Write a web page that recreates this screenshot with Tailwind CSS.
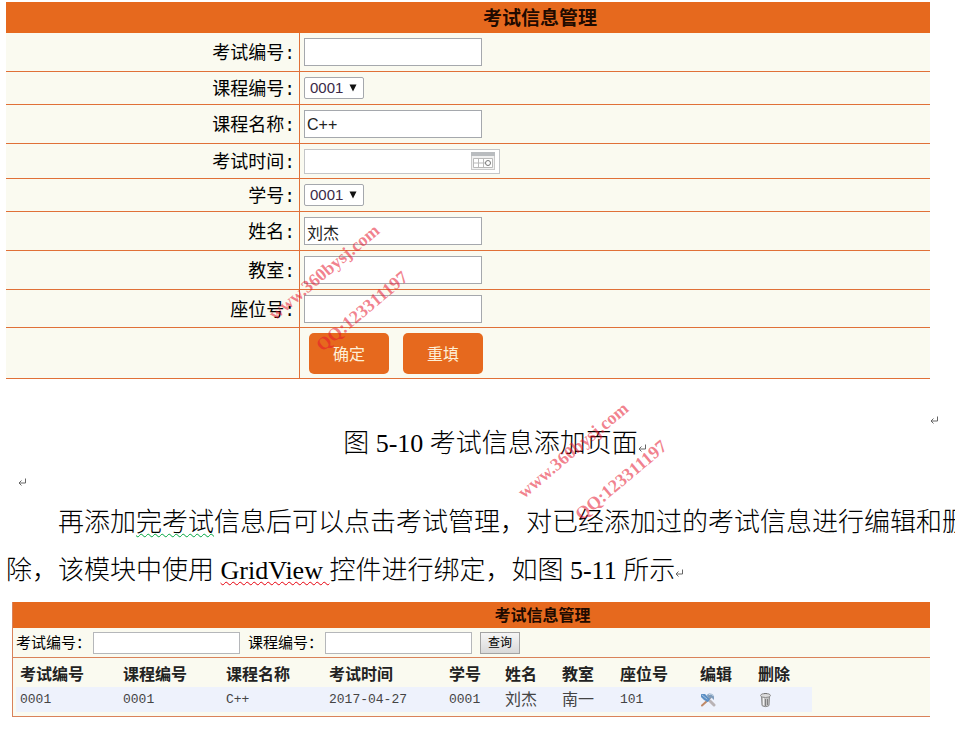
<!DOCTYPE html>
<html lang="zh-CN">

<head>
  <meta charset="UTF-8" />
  <meta name="viewport" content="width=device-width, initial-scale=1.0" />
  <script src="https://cdn.jsdelivr.net/npm/@tailwindcss/browser@4"></script>
  <title>考试信息管理</title>
</head>

<body class="relative overflow-x-hidden bg-white pt-0.5 text-black font-['Liberation_Sans','Noto_Sans_CJK_SC',sans-serif]">
  <svg class="hidden">
    <symbol id="return" viewBox="0 0 8 8">
      <path d="M7.5 0.5v4.5H1.5M3.5 2.5L1 5l2.500 2.500" fill="none" stroke="#666" />
    </symbol>
    <symbol id="arrow" viewBox="0 0 8 8">
      <path d="M0.500 0.500h7L4 7.500z" fill="#111" />
    </symbol>
  </svg>

  <!-- Add exam form -->
  <form class="pl-1.5 pr-[25px]">
    <table class="w-full border-separate border-spacing-0 bg-[#fafaf0]">
      <thead>
        <tr>
          <th colspan="2" class="h-[31px] bg-[#e6691e] p-0 pt-0.5 pl-36 text-[19px] leading-6 font-bold text-[#200a00]">考试信息管理</th>
        </tr>
      </thead>
      <tbody class="text-lg leading-6">
        <tr>
          <td class="h-[39px] w-[294px] border-r border-b border-[#e07038] pt-1 pr-1 text-right font-['Liberation_Mono','Noto_Sans_CJK_SC',monospace]"><label for="examNo">考试编号:</label></td>
          <td class="border-b border-[#e07038] pl-1"><input id="examNo" type="text" class="block h-7 w-[178px] border border-[#a5a8ad] bg-white px-0.5 text-base" /></td>
        </tr>
        <tr>
          <td class="h-[33px] border-r border-b border-[#e07038] pt-1 pr-1 text-right font-['Liberation_Mono','Noto_Sans_CJK_SC',monospace]"><label for="courseNo">课程编号:</label></td>
          <td class="border-b border-[#e07038] pl-1">
            <div class="relative w-[60px]">
              <select id="courseNo" class="block h-[22px] w-full appearance-none rounded-xs border border-[#a5a8ad] bg-white pl-[5px] text-[15px] leading-5 text-[#3b2a48]">
                <option>0001</option>
              </select>
              <svg class="pointer-events-none absolute top-[7px] right-[7px] size-2"><use href="#arrow" /></svg>
            </div>
          </td>
        </tr>
        <tr>
          <td class="h-[39px] border-r border-b border-[#e07038] pt-1 pr-1 text-right font-['Liberation_Mono','Noto_Sans_CJK_SC',monospace]"><label for="courseName">课程名称:</label></td>
          <td class="border-b border-[#e07038] pl-1"><input id="courseName" type="text" value="C++" class="block h-7 w-[178px] border border-[#a5a8ad] bg-white px-0.5 pt-0.5 text-base text-[#222]" /></td>
        </tr>
        <tr>
          <td class="h-[35px] border-r border-b border-[#e07038] pt-1 pr-1 text-right font-['Liberation_Mono','Noto_Sans_CJK_SC',monospace]"><label for="examTime">考试时间:</label></td>
          <td class="border-b border-[#e07038] pl-1">
            <div class="relative w-[196px]">
              <input id="examTime" type="text" class="block h-[25px] w-full border border-[#c4c6c8] bg-white px-0.5 text-base" />
              <svg class="pointer-events-none absolute top-[3px] right-[5px] h-[18px] w-6" viewBox="0 0 24 18" fill="none">
                <rect x="0.500" y="0.500" width="23" height="17" fill="#f1f1f1" stroke="#c9c9c9" />
                <rect width="24" height="4" fill="#b9bcbf" />
                <path d="M2.500 6.500h19v9h-19zM2.500 11h12M7.500 6.500v9M12.500 6.500v9" fill="#fff" stroke="#b9b9b9" />
                <circle cx="17" cy="11" r="2.500" fill="#fff" stroke="#777" />
              </svg>
            </div>
          </td>
        </tr>
        <tr>
          <td class="h-[33px] border-r border-b border-[#e07038] pt-1 pr-1 text-right font-['Liberation_Mono','Noto_Sans_CJK_SC',monospace]"><label for="studentNo">学号:</label></td>
          <td class="border-b border-[#e07038] pl-1">
            <div class="relative w-[60px]">
              <select id="studentNo" class="block h-[22px] w-full appearance-none rounded-xs border border-[#a5a8ad] bg-white pl-[5px] text-[15px] leading-5 text-[#3b2a48]">
                <option>0001</option>
              </select>
              <svg class="pointer-events-none absolute top-[7px] right-[7px] size-2"><use href="#arrow" /></svg>
            </div>
          </td>
        </tr>
        <tr>
          <td class="h-[39px] border-r border-b border-[#e07038] pt-1 pr-1 text-right font-['Liberation_Mono','Noto_Sans_CJK_SC',monospace]"><label for="studentName">姓名:</label></td>
          <td class="border-b border-[#e07038] pl-1"><input id="studentName" type="text" value="刘杰" class="block h-7 w-[178px] border border-[#a5a8ad] bg-white px-0.5 pt-0.5 text-base text-[#222]" /></td>
        </tr>
        <tr>
          <td class="h-[39px] border-r border-b border-[#e07038] pt-1 pr-1 text-right font-['Liberation_Mono','Noto_Sans_CJK_SC',monospace]"><label for="room">教室:</label></td>
          <td class="border-b border-[#e07038] pl-1"><input id="room" type="text" class="block h-7 w-[178px] border border-[#a5a8ad] bg-white px-0.5 text-base" /></td>
        </tr>
        <tr>
          <td class="h-[38px] border-r border-b border-[#e07038] pt-1 pr-1 text-right font-['Liberation_Mono','Noto_Sans_CJK_SC',monospace]"><label for="seat">座位号:</label></td>
          <td class="border-b border-[#e07038] pl-1"><input id="seat" type="text" class="block h-7 w-[178px] border border-[#a5a8ad] bg-white px-0.5 text-base" /></td>
        </tr>
        <tr>
          <td class="h-[51px] border-r border-b border-[#e07038]"></td>
          <td class="border-b border-[#e07038] pl-[9px]">
            <div class="flex gap-[14px]">
              <button type="button" class="h-[41px] w-20 rounded-[5px] bg-[#e6691e] pt-1 text-base text-[#fdf0d8]">确定</button>
              <button type="reset" class="h-[41px] w-20 rounded-[5px] bg-[#e6691e] pt-1 text-base text-[#fdf0d8]">重填</button>
            </div>
          </td>
        </tr>
      </tbody>
    </table>
  </form>

  <!-- Document text -->
  <div class="overflow-hidden pt-0.5 pl-1.5 text-[26px] whitespace-nowrap font-light font-['Liberation_Serif','Noto_Sans_CJK_SC',serif]">
    <div class="flex h-[47px] items-end justify-end pr-[17px] pb-1"><svg class="size-2"><use href="#return" /></svg></div>
    <p class="flex items-end justify-center pl-7 leading-8">图 5-10 考试信息添加页面<svg class="mb-2 size-2"><use href="#return" /></svg></p>
    <div class="flex h-[39px] items-center pt-1 pl-3"><svg class="size-2"><use href="#return" /></svg></div>
    <p class="pl-[52px] leading-[48px]">再添加<span class="underline decoration-green-600 decoration-wavy decoration-1 underline-offset-2 [text-decoration-skip-ink:none]">完考试</span>信息后可以点击考试管理，对已经添加过的考试信息进行编辑和删</p>
    <p class="leading-[48px]">除，该模块中使用 <span class="underline decoration-red-600 decoration-wavy decoration-1 underline-offset-2 [text-decoration-skip-ink:none]">GridView </span>控件进行绑定，如图 5-11 所示<svg class="inline size-2"><use href="#return" /></svg></p>
  </div>

  <!-- Exam list -->
  <section class="mt-[7px] mr-[25px] ml-3 border-b border-l border-[#d9825a] bg-[#fafaf0]">
    <h2 class="h-[26px] bg-[#e6691e] pl-[142px] text-center text-base leading-7 font-bold text-[#200a00]">考试信息管理</h2>
    <form class="flex h-[30px] items-center border-b border-[#d9825a] pl-[3px] text-[15px] leading-5">
      <label for="searchExam">考试编号：</label>
      <input id="searchExam" type="text" class="ml-0.5 h-[22px] w-[147px] border border-[#b5b7ba] bg-white px-0.5 text-sm" />
      <label for="searchCourse" class="ml-2">课程编号：</label>
      <input id="searchCourse" type="text" class="ml-0.5 h-[22px] w-[147px] border border-[#b5b7ba] bg-white px-0.5 text-sm" />
      <button type="button" class="ml-2 h-[22px] w-10 border border-[#a3a3a3] bg-linear-to-b from-[#f6f6f6] to-[#d9d9d9] text-xs">查询</button>
    </form>
    <div class="px-[3px] py-1">
      <table class="w-[796px] table-fixed border-separate border-spacing-0 text-left text-base leading-6">
        <thead class="text-[#222]">
          <tr>
            <th class="h-[25px] w-[103px] p-0 pl-1">考试编号</th>
            <th class="w-[103px] p-0 pl-1">课程编号</th>
            <th class="w-[103px] p-0 pl-1">课程名称</th>
            <th class="w-[120px] p-0 pl-1">考试时间</th>
            <th class="w-14 p-0 pl-1">学号</th>
            <th class="w-[57px] p-0 pl-1">姓名</th>
            <th class="w-[58px] p-0 pl-1">教室</th>
            <th class="w-20 p-0 pl-1">座位号</th>
            <th class="w-[58px] p-0 pl-1">编辑</th>
            <th class="w-[58px] p-0 pl-1">删除</th>
          </tr>
        </thead>
        <tbody class="bg-[#eef2fc] text-[#444]">
          <tr>
            <td class="h-[25px] p-0 pl-1 text-[13px] font-['Liberation_Mono',monospace]">0001</td>
            <td class="p-0 pl-1 text-[13px] font-['Liberation_Mono',monospace]">0001</td>
            <td class="p-0 pl-1 text-[13px] font-['Liberation_Mono',monospace]">C++</td>
            <td class="p-0 pl-1 text-[13px] font-['Liberation_Mono',monospace]">2017-04-27</td>
            <td class="p-0 pl-1 text-[13px] font-['Liberation_Mono',monospace]">0001</td>
            <td class="p-0 pl-1">刘杰</td>
            <td class="p-0 pl-1">南一</td>
            <td class="p-0 pl-1 text-[13px] font-['Liberation_Mono',monospace]">101</td>
            <td class="p-0 pl-1">
              <a href="#" aria-label="编辑" class="block w-4">
                <svg class="size-4" viewBox="0 0 16 16" fill="none" stroke-linecap="round">
                  <path d="M10 9l4 4" stroke="#b9b3b5" stroke-width="3" />
                  <path d="M7 9l-5 4.500" stroke="#c08a68" stroke-width="2" />
                  <path d="M7 9l4-4" stroke="#8b98a8" stroke-width="2" />
                  <path d="M1 2l4 0 5 5-2 3-4-2-3-3z" fill="#5b8fc4" />
                  <path d="M2 3l5 4" stroke="#a9c6e4" />
                  <path d="M7 3c2-2 5-2 7 1l0 4-3-3-3 1z" fill="#7f9dbd" />
                  <path d="M9 2.500c2-1 3-.5 4.500 1.500" stroke="#dbe7f2" />
                </svg>
              </a>
            </td>
            <td class="p-0 pl-1">
              <a href="#" aria-label="删除" class="block w-4">
                <svg class="size-4" viewBox="0 0 16 16" fill="none">
                  <path d="M3.500 4.500l.5 9c1 1.500 6 1.500 7 0l.5-9z" fill="#c4c4c4" stroke="#8c8c8c" />
                  <path d="M7.500 7v7M9.500 7v6" stroke="#808080" />
                  <path d="M5.500 6v7" stroke="#f2f2f2" />
                  <ellipse cx="7.500" cy="3.500" rx="5" ry="2" fill="#dcdcdc" stroke="#8c8c8c" />
                  <path d="M6 1.500h3" stroke="#777" />
                </svg>
              </a>
            </td>
          </tr>
        </tbody>
      </table>
    </div>
  </section>

  <!-- Watermarks -->
  <div class="pointer-events-none text-center text-lg leading-6 font-bold text-[#e6142d]/55 font-['Liberation_Serif',serif]">
    <span class="absolute top-[260px] left-[244px] w-40 -rotate-40">www.360bysj.com</span>
    <span class="absolute top-[299px] left-[282px] w-40 -rotate-40">QQ:123311197</span>
    <span class="absolute top-[438px] left-[493px] w-40 -rotate-40">www.360bysj.com</span>
    <span class="absolute top-[468px] left-[541px] w-40 -rotate-40">QQ:123311197</span>
  </div>
</body>
</html>
